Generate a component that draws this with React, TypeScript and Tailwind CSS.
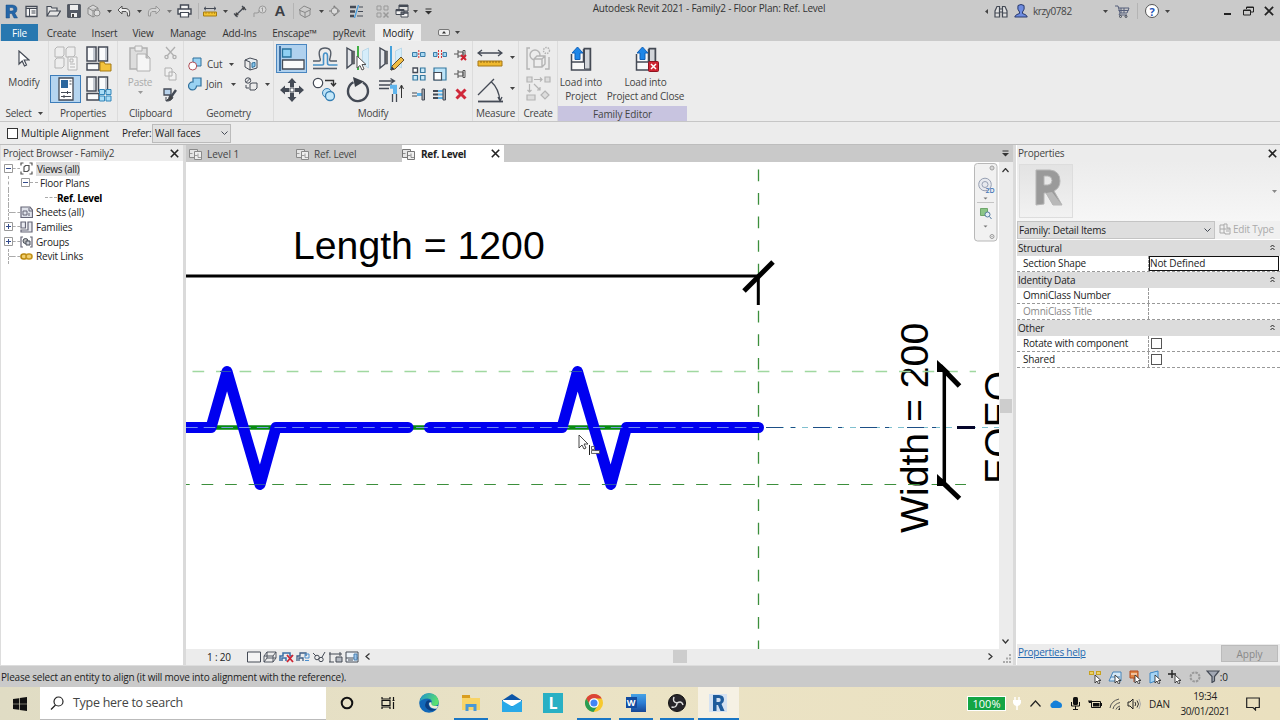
import type { ReactNode } from 'react';

type IconProps = { w?: number; h?: number; vb?: string; children: ReactNode };

const Icon = ({ w = 16, h = 16, vb, children }: IconProps) => (
  <svg width={w} height={h} viewBox={vb ?? `0 0 ${w} ${h}`} fill="none" stroke="#444a55" className="block shrink-0">
    {children}
  </svg>
);

const Slot = ({ className, children }: { className: string; children?: ReactNode }) => (
  <div className={`flex shrink-0 items-center justify-center ${className}`}>{children}</div>
);

const Caret = ({ color = '#444' }: { color?: string }) => (
  <Icon w={5} h={3}><path d="M0 0h5L2.5 3z" fill={color} stroke="none" /></Icon>
);

const Divider = () => <div className="h-4 w-px bg-[#b4b4b4]" />;

const Close = ({ s = 9 }: { s?: number }) => (
  <Icon w={s} h={s} vb="0 0 9 9"><path d="M.8.8l7.4 7.4M8.2.8L.8 8.2" stroke="#222" strokeWidth="1.6" /></Icon>
);

const PlanIcon = ({ color = '#777' }: { color?: string }) => (
  <Icon w={13} h={12}>
    <path d="M.5 1.5h8v8h-8z" fill="#e6e6e6" stroke={color} />
    <path d="M5.500 3.500h7v8h-7z" fill="#efefef" stroke={color} />
    <path d="M.5 5.500h3M5.500 7.500h3M9 5.500v4h3" stroke={color} strokeWidth=".8" />
  </Icon>
);

/* ---------- title bar ---------- */

const TitleBar = () => (
  <div className="flex h-[22px] shrink-0 items-center">
    <Slot className="w-[22px]">
      <Icon w={13} h={15}>
        <path fillRule="evenodd" d="M1 1h6.500q4.500.5 4.500 4.300 0 2.700-2.300 3.700L12.500 14H9L6.800 9.500H4.500V14H1zM4.500 3.500V7H7q1.700-.2 1.700-1.700T7 3.500z" fill="#2466a8" stroke="#174d87" strokeWidth=".5" />
      </Icon>
    </Slot>
    <Slot className="w-[18px]">
      <Icon w={13} h={13}><path d="M1 1.500h11v10H1z" fill="#f4f4f4" strokeWidth="1.300" /><path d="M1 3.500h11M4.500 4v7M6.500 6h4M6.500 8h4" /></Icon>
    </Slot>
    <Slot className="w-[26px]">
      <Icon w={15} h={12}><path d="M1 11V1.500h4l1 1.500h5v3M1 11l3-5h10.500l-3 5z" fill="#e5e5e5" strokeWidth="1.200" /></Icon>
    </Slot>
    <Slot className="w-4">
      <Icon w={14} h={14}><path d="M.7.7h12.600v12.600H.7z" fill="#555b66" /><path d="M3 1h8v5H3zM4 9h6v4H4z" fill="#eee" stroke="none" /><path d="M5 10h2v3H5z" fill="#444" stroke="none" /></Icon>
    </Slot>
    <Slot className="w-6">
      <Icon w={14} h={14}><g stroke="#8b8b8b"><path d="M1 4l5-3 5 3v6l-5 3-5-3zM1 4l5 3 5-3M6 7v6" fill="#d7d7d7" /><circle cx="10" cy="9" r="3" fill="#ddd" /></g></Icon>
    </Slot>
    <Slot className="w-[6px]"><Caret /></Slot>
    <Slot className="w-6">
      <Icon w={14} h={12}><path d="M5 1L1 5l4 4V6.500h4q2 .5 1.500 4.500h2q1-7-3.500-7.500H5z" fill="#eee" stroke="#555" /></Icon>
    </Slot>
    <Slot className="w-[6px]"><Caret /></Slot>
    <Slot className="w-6">
      <Icon w={14} h={12}><path d="M9 1l4 4-4 4V6.500H5Q3 7 3.500 11h-2Q.5 4 5 3.500h4z" fill="#d5d5d5" stroke="#999" /></Icon>
    </Slot>
    <Slot className="w-[6px]"><Caret color="#777" /></Slot>
    <Slot className="w-6">
      <Icon w={15} h={14}><path d="M3.500 5V1h8v4M1 5h13v5H1z" fill="#f5f5f5" strokeWidth="1.400" /><path d="M3.500 8.500h8v4.500h-8z" fill="#fff" strokeWidth="1.200" /></Icon>
    </Slot>
    <Slot className="w-1"><Divider /></Slot>
    <Slot className="w-5">
      <Icon w={14} h={11}><path d="M1 2.500h12M3 .8L1 2.500l2 1.700M11 .8l2 1.700-2 1.700" /><path d="M.5 6h13v4H.5z" fill="#f4c430" stroke="#a67c12" /><path d="M3 6v2M6 6v2M9 6v2M11.500 6v2" stroke="#a67c12" strokeWidth=".7" /></Icon>
    </Slot>
    <Slot className="w-[10px]"><Caret /></Slot>
    <Slot className="w-5">
      <Icon w={14} h={13}><path d="M2 11L11.500 2M1 8.500l3.500 3.500M9 1l4 4" strokeWidth="1.300" /><path d="M2 11l1-4 3 3zM12 2L8.500 3l2.500 2.500z" fill="#444" stroke="none" /></Icon>
    </Slot>
    <Slot className="w-5">
      <Icon w={14} h={13}><g stroke="#999"><path d="M1 12v-4h3q3 0 2-3" /><circle cx="9.500" cy="4.500" r="3.500" fill="#d8d8d8" /><path d="M8.500 3.500l1-.8v4" /></g></Icon>
    </Slot>
    <Slot className="w-5 font-['Liberation_Sans',sans-serif] text-[15px] font-bold text-[#3c3f45]">A</Slot>
    <Slot className="w-[6px]"><Divider /></Slot>
    <Slot className="w-[18px]">
      <Icon w={14} h={13}><path d="M1 5l5-4 7 3-1 1v5l-5 2.500-5-3V5.500zM2 5.500l5 2L12 5M7 7.500v5" stroke="#888" fill="#ccc" /></Icon>
    </Slot>
    <Slot className="w-[14px]"><Caret /></Slot>
    <Slot className="w-[14px]">
      <Icon w={12} h={12}><path d="M0 6h3M5 .8L10.500 6 5 11z" fill="#bbb" stroke="#777" /><circle cx="5.500" cy="6" r="3.200" fill="#ddd" stroke="#888" /></Icon>
    </Slot>
    <Slot className="w-7">
      <Icon w={15} h={13}><path d="M1 2h6M1 6.500h5M1 11h4" strokeWidth="2.400" /><path d="M10 2h4M9 6.500h5M8 11h6" strokeWidth="1.200" /><path d="M9.500 0L5.500 13" stroke="#4b9fe0" strokeWidth="1.300" /></Icon>
    </Slot>
    <Slot className="w-0"><Divider /></Slot>
    <Slot className="w-6">
      <Icon w={13} h={13}><g stroke="#999"><path d="M1 1h4v4H1zM8 1h4v4H8zM1 8h4v4H1z" /><path d="M7.500 7.500l5 5M12.500 7.500l-5 5" strokeWidth="1.500" /></g></Icon>
    </Slot>
    <Slot className="w-4">
      <Icon w={15} h={14}><path d="M4 1h9v6H4z" fill="#ddd" /><path d="M4 2h9" strokeWidth="2" /><path d="M1 5.500h8v5H1zM6 8h7v5H6z" fill="#f2f2f2" /><path d="M6 9h7M1 6.500h8" strokeWidth="1.500" /></Icon>
    </Slot>
    <Slot className="w-[10px]"><Caret /></Slot>
    <Slot className="w-4"><Icon w={7} h={7}><path d="M.5 1h6" stroke="#333" /><path d="M0 3h7L3.500 6.500z" fill="#333" stroke="none" /></Icon></Slot>

    <div className="flex flex-1 justify-center whitespace-nowrap pb-[6px] tracking-[-0.2px] text-[#333]">
      Autodesk Revit 2021 - Family2 - Floor Plan: Ref. Level
    </div>

    <Slot className="w-2"><Icon w={3} h={5}><path d="M3 0v5L0 2.500z" fill="#444" stroke="none" /></Icon></Slot>
    <Slot className="w-[22px]">
      <Icon w={14} h={13}><path d="M1 12V6l2-4.500h2.500V12zM13 12V6l-2-4.500H8.500V12zM5.500 4h3v3h-3zM1 8h4.500M8.500 8H13" fill="#e0e0e0" strokeWidth="1.200" /></Icon>
    </Slot>
    <Slot className="w-[18px]">
      <Icon w={14} h={14}><path d="M4 1.500q3-2 6 0 1 4-1.500 6.500v1.500q4 .8 4.800 3.500H.7q.8-2.700 4.800-3.500V8Q3 5.500 4 1.500z" fill="#6d8be0" stroke="#2a3a6c" /></Icon>
    </Slot>
    <div className="w-[70px] shrink-0 pl-[3px] tracking-[-0.4px] text-[#444]">krzy0782</div>
    <Slot className="w-[10px]"><Caret /></Slot>
    <Slot className="w-6">
      <Icon w={15} h={13}><path d="M0 1h3l2 7h7l2-5H4M5 8l-1 2h8M6 3v5M9 3v5M3.500 5.500h10" stroke="#555e7a" /><circle cx="5.500" cy="11.500" r="1" /><circle cx="11" cy="11.500" r="1" /></Icon>
    </Slot>
    <Slot className="w-[6px]"><Divider /></Slot>
    <Slot className="w-6">
      <div className="flex size-[14px] items-center justify-center rounded-full border border-[#555] bg-white text-[11px] font-bold leading-none text-[#2153b8]">?</div>
    </Slot>
    <Slot className="w-[6px]"><Caret /></Slot>
    <div className="w-[47px] shrink-0" />
    <Slot className="w-5"><div className="mt-[6px] h-[2px] w-[7px] bg-[#222]" /></Slot>
    <Slot className="w-[22px]">
      <Icon w={11} h={10}><path d="M3.500 3V1h7v5H8M3 1.500h8" stroke="#222" /><path d="M.5 4h7v5h-7zM0 4.500h8" stroke="#222" /></Icon>
    </Slot>
    <Slot className="w-5"><Close s={10} /></Slot>
    <div className="w-px" />
  </div>
);

const RibbonTabs = () => (
  <div className="flex h-[19px] shrink-0 pt-[2px] tracking-[-0.2px] text-[#333]">
    <Slot className="ml-px h-[17px] w-[37px] bg-[#2878b0] text-white">File</Slot>
    <Slot className="w-[47px]">Create</Slot>
    <Slot className="w-[39px]">Insert</Slot>
    <Slot className="w-[38px]">View</Slot>
    <Slot className="w-[52px]">Manage</Slot>
    <Slot className="w-[51px]">Add-Ins</Slot>
    <Slot className="w-[59px]">Enscape™</Slot>
    <Slot className="w-[50px]">pyRevit</Slot>
    <Slot className="ml-px w-[46px] bg-[#f0f0f0] text-[#222]">Modify</Slot>
    <Slot className="w-14 gap-[5px]">
      <Icon w={12} h={7}><rect x=".5" y=".5" width="11" height="6" rx="1.500" fill="#eee" stroke="#777" /><path d="M4 4.500h4L6 2z" fill="#333" stroke="none" /></Icon>
      <Caret />
    </Slot>
  </div>
);

/* ---------- ribbon ---------- */

const Panel = ({ className, label, children }: { className: string; label: ReactNode; children: ReactNode }) => (
  <div className={`flex shrink-0 flex-col border-r border-[#dcdcdc] ${className}`}>
    <div className="flex h-[65px] shrink-0">{children}</div>
    <div className="flex h-[15px] items-center justify-center gap-[6px] whitespace-nowrap pb-px">{label}</div>
  </div>
);

const TypeProps = ({ badge }: { badge: ReactNode }) => (
  <Icon w={26} h={26}>
    <path d="M1 1h9v14H1zM12.500 1h9v14h-9zM1 17.500h12V24H1z" fill="#fafbfc" strokeWidth="1.500" />
    <path d="M8 2v12M20 2v12" stroke="#c3c8d0" strokeWidth="2" />
    {badge}
  </Icon>
);

const MirrorIcon = ({ axis, children }: { axis: string; children: ReactNode }) => (
  <Icon w={26} h={26}>
    <path d="M2 2l5 3v13l-5 4z" fill="#e4e6ea" strokeWidth="1.400" /><path d="M7.500 5h2v13h-2z" fill="#666" strokeWidth=".6" />
    <path d="M23.500 2l-6 3v13l6 4z" fill="#d5edfa" stroke="#b3d3e6" strokeWidth=".8" />
    <path d="M13 0v24" stroke={axis} strokeWidth="2" />
    {children}
  </Icon>
);

const LoadIcon = ({ close }: { close?: boolean }) => (
  <Icon w={26} h={27}>
    <path d="M3.500 8v16h19V2.500h-7" fill="#f8f8f8" strokeWidth="1.500" />
    <path d="M16.500 3h5.500v20h-5.500z" fill="#d2d5da" />
    <path d="M4 16h11.500V3" strokeWidth="1.500" />
    <path d="M9.500 1l5.500 6h-3v6.500H7V7H4z" fill="#1d86e8" stroke="#1060b8" />
    {close && <><rect x="15.500" y="15.500" width="10" height="10" rx="1" fill="#cf2433" stroke="#8e1320" /><path d="M18 18l5 5M23 18l-5 5" stroke="#fff" strokeWidth="1.500" /></>}
  </Icon>
);

const PinIcon = ({ off }: { off?: boolean }) => (
  <Icon w={13} h={13}>
    <path d="M0 6h4M4 2v8M4 4h5v4H4M9 2.500v7h2v-7z" stroke="#555" />
    {off && <path d="M7 7l5 5M12 7l-5 5" stroke="#d02030" strokeWidth="2" />}
  </Icon>
);

const ModifyTools = () => (
  <>
    <div className="grid grid-cols-[35px_31px_35px_32px] grid-rows-[31px_31px] pt-[2px]">
      <Slot className="">
        <div className="flex h-[29px] w-[31px] items-center justify-center border border-[#4a86c0] bg-[#b0d1ee]">
          <Icon w={26} h={25}><path d="M1 0v25" stroke="#1a4f88" strokeWidth="1.500" /><path d="M3.500 3h8.500v8H3.500z" fill="#8fd0f4" stroke="#28729d" strokeWidth="1.300" /><path d="M3.500 14h21.500v9H3.500z" fill="#fafafa" strokeWidth="1.300" /></Icon>
        </div>
      </Slot>
      <Slot className="">
        <Icon w={26} h={24}>
          <path d="M1 14h6q2 0 1-3-3-10 5-10t5 10q-1 3 1 3h6" stroke="#565d68" strokeWidth="1.400" />
          <path d="M1 18h9q2 0 1.500-2V9q0-3 2-3t2 3v7q0 2 2 2h8" stroke="#4691c8" strokeWidth="1.600" />
          <path d="M1 21.500h24" stroke="#565d68" strokeWidth="1.600" />
        </Icon>
      </Slot>
      <Slot className="">
        <MirrorIcon axis="#42b045"><path d="M12 10v12l3-2.500 2 4.500 2-1-2-4.500h4z" fill="#fff" stroke="#555" /></MirrorIcon>
      </Slot>
      <Slot className="">
        <MirrorIcon axis="#46a2dc"><path d="M13 24l1-4 9-9 3 3-9 9z" fill="#f1bd43" stroke="#67502a" /><path d="M13 24l1-3 2 2z" fill="#333" /></MirrorIcon>
      </Slot>
      <Slot className="">
        <Icon w={26} h={26}>
          <path d="M13 1l4.500 5H15v4h-4V6H8.500zM13 25l4.500-5H15v-4h-4v4H8.500zM1 13l5-4.500V11h4v4H6v2.500zM25 13l-5-4.500V11h-4v4h4v2.500z" fill="#444a55" stroke="none" />
          <path d="M11 11h4v4h-4z" fill="#fff" />
        </Icon>
      </Slot>
      <Slot className="">
        <Icon w={26} h={25}><circle cx="6" cy="6" r="4.700" fill="#fff" strokeWidth="1.200" /><path d="M13 3.500h8.500V8M19 6l2.500 3L24 6" stroke="#333" strokeWidth="1.400" /><circle cx="15" cy="16" r="4.500" fill="#b9e0f6" stroke="#347eb3" /><circle cx="18" cy="19" r="4.500" fill="#c4e8fa" stroke="#347eb3" strokeWidth="1.300" /></Icon>
      </Slot>
      <Slot className="">
        <Icon w={26} h={26}><path d="M8.500 5.200a10 10 0 1 0 9.500 .3" strokeWidth="2.400" /><path d="M8 0l11 4.500L10 10z" fill="#3a3f48" stroke="none" /></Icon>
      </Slot>
      <Slot className="">
        <Icon w={26} h={26}><path d="M1 4h15M12.500 1.500L16.500 4l-4 2.500M1 8h13M1 11.500h10" strokeWidth="1.300" /><path d="M14.500 17v8M18.500 17v8" strokeWidth="1.300" /><path d="M12 9.800h5V17" stroke="#60b5ed" strokeWidth="4" /><path d="M23.500 21V9M21.500 12l2-4 2 4" stroke="#333" /></Icon>
      </Slot>
    </div>
    <div className="ml-[1px] grid grid-cols-[21px_21px_21px] grid-rows-[20px_20px_20px] pt-[3px]">
      <Slot className=""><Icon w={14} h={9}><path d="M.5 2.500H5v4H.5zM8.500 2.500H13v4H8.500z" fill="#a8d8f2" stroke="#3b7da8" /><path d="M6.800 0v9" stroke="#d33" strokeDasharray="2 1" /></Icon></Slot>
      <Slot className=""><Icon w={14} h={9}><path d="M.5 2.500H4v4H.5zM10 2.500h3.500v4H10z" fill="#a8d8f2" stroke="#3b7da8" /><path d="M5.500 0v9M8.500 0v9" stroke="#d33" strokeDasharray="2 1" /></Icon></Slot>
      <Slot className=""><PinIcon off /></Slot>
      <Slot className=""><Icon w={14} h={14}><path d="M1 1h4.500v4.500H1z" fill="#fff" strokeWidth="1.300" /><path d="M8.500 1H13v4.500H8.500zM1 8.500h4.500V13H1zM8.500 8.500H13V13H8.500z" fill="#cdebf9" stroke="#35789f" strokeWidth="1.200" /></Icon></Slot>
      <Slot className=""><Icon w={14} h={14}><path d="M1 1h12v12H1z" fill="#bde4f8" stroke="#35789f" strokeWidth="1.200" /><path d="M1 5.500h7.500V13H1z" fill="#fff" strokeWidth="1.200" /></Icon></Slot>
      <Slot className=""><PinIcon /></Slot>
      <Slot className=""><Icon w={14} h={13}><path d="M0 5h5M0 8h5" /><path d="M5 6.500h5" stroke="#5cb2e8" strokeWidth="3" /><path d="M10 1h2.500v11H10z" fill="#a4a9b0" /></Icon></Slot>
      <Slot className=""><Icon w={14} h={13}><path d="M0 3h5M0 6.500h5M0 10h5" strokeWidth="1.800" /><path d="M5 3h5M5 6.500h5M5 10h5" stroke="#5cb2e8" strokeWidth="2" /><path d="M10 1h2.500v11H10z" fill="#a4a9b0" /></Icon></Slot>
      <Slot className=""><Icon w={12} h={12}><path d="M1.500 1.500l9 9M10.500 1.500l-9 9" stroke="#d0283a" strokeWidth="3" /></Icon></Slot>
    </div>
  </>
);

const Ribbon = () => (
  <div className="flex h-[81px] shrink-0 border-b border-[#c6c6c6] bg-[#ececec] tracking-[-0.25px] text-[#444]">
    <Panel className="w-[49px]" label={<><span>Select</span><Caret /></>}>
      <div className="flex flex-1 flex-col items-center pt-[9px]">
        <Icon w={12} h={18}><path d="M1 1v13l3.200-3 2.300 5 2-1-2.300-5H11z" fill="#fff" strokeWidth="1.200" /></Icon>
        <div className="mt-[7px] tracking-[-0.1px]">Modify</div>
      </div>
    </Panel>
    <Panel className="w-[69px]" label="Properties">
      <div className="grid grid-cols-[33px_34px] grid-rows-[31px_30px] pt-[2px]">
        <Slot className="">
          <Icon w={26} h={26}><g stroke="#b5b5b5"><path d="M2 3l2-2h7v8l-2 2H2zM13 3l2-2h7v8l-2 2h-7zM2 14l2-2h7v8l-2 2H2z" fill="#eee" /><path d="M15 11h9v13h-9z" fill="#f4f4f4" /><path d="M17 13h3v3h-3zM17 18h5M17 21h5" /></g></Icon>
        </Slot>
        <Slot className=""><TypeProps badge={<path d="M14 25v-9h4l1 2h6v7z" fill="#f2c23c" stroke="#a67b14" />} /></Slot>
        <Slot className="">
          <div className="flex h-[28px] w-[31px] items-center justify-center border border-[#3d7dba] bg-[#b5d5f0]">
            <Icon w={16} h={24}><path d="M1 1h14v22H1z" fill="#fff" strokeWidth="1.300" /><path d="M3 3h7v8H3z" fill="#2c679e" stroke="none" /><path d="M11.500 4h2M11.500 7h2M3 15.500h10M3 19.500h10M9.500 14v3M6 18v3" /></Icon>
          </div>
        </Slot>
        <Slot className=""><TypeProps badge={<path d="M13.500 13.500h5v5h-5zM20 13.500h5v5h-5zM13.500 20h5v5h-5zM20 20h5v5h-5z" fill="#aadcf6" stroke="#3286ba" />} /></Slot>
      </div>
    </Panel>
    <Panel className="w-[66px]" label="Clipboard">
      <div className="flex w-[44px] flex-col items-center pt-[4px] text-[#aaa]">
        <Icon w={24} h={27}><g stroke="#b0b0b0"><path d="M2 3h17v21H2z" fill="#ddd" strokeWidth="1.500" /><path d="M7 1h7v5H7z" fill="#eee" /><path d="M9 9h9l4 4v13H9zM18 9v4h4" fill="#f5f5f5" /></g></Icon>
        <div className="mt-[3px]">Paste</div>
        <div className="mt-[2px]"><Caret color="#999" /></div>
      </div>
      <div className="flex w-4 flex-col items-center gap-[7px] pt-[5px]">
        <Icon w={13} h={14}><g stroke="#b0b0b0" strokeWidth="1.300"><path d="M2 1l8 9M11 1L3 10" /><circle cx="2.500" cy="11" r="1.600" /><circle cx="10.500" cy="11" r="1.600" /></g></Icon>
        <Icon w={13} h={14}><path d="M1 1h6l1 1v7H1zM5 5h5l2 2v6H5z" fill="#f1f1f1" stroke="#b0b0b0" /></Icon>
        <Icon w={14} h={14}><path d="M1 1h7v6H1z" fill="#b9d3ec" strokeWidth="1.300" /><path d="M13 2L8 9" strokeWidth="2.400" /><path d="M7 7l3 2.500q-2 4-7 3.500 3-2 4-6z" fill="#444" /><path d="M3 9v4" /></Icon>
      </div>
    </Panel>
    <Panel className="w-[90px]" label="Geometry">
      <div className="flex flex-col pl-[4px] pt-[13px]">
        <div className="flex h-5 items-center">
          <Icon w={14} h={14}><path d="M5 1h8v8H5z" fill="#99d2f2" stroke="#31719c" /><circle cx="4.700" cy="9" r="4" fill="#fff" stroke="#b05058" /></Icon>
          <span className="ml-[5px] w-[22px]">Cut</span><Caret />
          <div className="ml-[10px]"><Icon w={14} h={14}><path d="M1 3l5-2 7 2v8l-7 2V5z" fill="#e9edf0" /><path d="M1 3v7l5 3" /><path d="M8 6l3-.6v4L8 10.500z" fill="#8bcaf0" stroke="#31719c" /></Icon></div>
        </div>
        <div className="flex h-5 items-center">
          <Icon w={14} h={14}><path d="M5 1h8v8H8.500A4 4 0 1 1 5 5z" fill="#99d2f2" stroke="#31719c" strokeWidth="1.200" /></Icon>
          <span className="ml-[4px] w-[25px]">Join</span><Caret />
          <div className="ml-2 mr-[7px]"><Icon w={14} h={14}><circle cx="4" cy="3.500" r="2.700" /><path d="M2 5.500L6 1.500M2 8v3h3M6 7l2-1h5v5l-2 2H6z" /></Icon></div>
          <Caret />
        </div>
      </div>
    </Panel>
    <Panel className="w-[199px]" label="Modify"><ModifyTools /></Panel>
    <Panel className="w-[46px]" label="Measure">
      <div className="grid w-[34px] grid-rows-[31px_31px] justify-center pt-[2px]">
        <Slot className=""><Icon w={26} h={20}><path d="M1 4h24M5 1L1 4l4 3M21 1l4 3-4 3" strokeWidth="1.300" /><path d="M1 12h24v5H1z" fill="#f0b92e" stroke="#a57616" /><path d="M4 12v2M7 12v2M10 12v2M13 12v2M16 12v2M19 12v2M22 12v2" stroke="#805a12" strokeWidth=".8" /></Icon></Slot>
        <Slot className=""><Icon w={26} h={26}><path d="M1 24.500h25" strokeWidth="1.800" /><path d="M1 18L17 2M14 4.500q8 7 9 20M21 20l2 4 2-4" strokeWidth="1.300" /></Icon></Slot>
      </div>
      <div className="ml-[3px] grid grid-rows-[31px_31px] items-center pt-[1px]"><Caret /><Caret /></div>
    </Panel>
    <Panel className="w-[39px]" label="Create">
      <div className="grid flex-1 grid-rows-[30px_30px] pt-[2px]">
        <Slot className=""><Icon w={25} h={25}><g stroke="#b4b4b4" strokeWidth="1.400"><path d="M4 2H1v21h3M19 23h4V11" /><circle cx="9" cy="9" r="5" /><path d="M8 13l3-3h8v8l-3 3H8zM8 13h8v8M16 13l3-3" fill="#eee" /><circle cx="20.500" cy="4.500" r="3" strokeDasharray="1.500 1" /></g></Icon></Slot>
        <Slot className=""><Icon w={25} h={25}><g stroke="#b4b4b4" strokeWidth="1.200"><path d="M1 1h5v5H1zM19 1h5v5h-5zM1 19h8v5H1zM19 15l4 4-4 4-4-4z" fill="#ddd" /><path d="M8 3.500h8M14 1.500l2 2-2 2M3.500 8v8M1.500 14l2 2 2-2M8 8l6 6M14 11v3h-3" /></g></Icon></Slot>
      </div>
    </Panel>
    <div className="flex w-[129px] shrink-0 flex-col whitespace-nowrap text-center leading-[14px]">
      <div className="flex h-[65px]">
        <div className="flex w-[46px] flex-col items-center pt-[5px]"><LoadIcon /><div className="mt-[2px] tracking-[-0.15px]">Load into<br />Project</div></div>
        <div className="flex w-[83px] flex-col items-center pt-[5px]"><LoadIcon close /><div className="mt-[2px] tracking-[-0.2px]">Load into<br />Project and Close</div></div>
      </div>
      <div className="flex h-[15px] items-center justify-center bg-[#c8c4e0] tracking-[-0.1px]">Family Editor</div>
    </div>
  </div>
);

const OptionsBar = () => (
  <div className="flex h-[23px] shrink-0 items-center border-b border-[#bdbdbd] bg-[#ececec] pl-[7px] text-[#222]">
    <div className="size-[11px] border border-[#333] bg-white" />
    <span className="ml-[3px] w-[101px]">Multiple Alignment</span>
    <span className="w-[30px] tracking-[-0.3px]">Prefer:</span>
    <div className="flex h-[19px] w-[79px] items-center justify-between border border-[#bbb] bg-[#e1e1e1] px-[2px] tracking-[-0.1px]">
      Wall faces
      <Icon w={7} h={4}><path d="M.5.5l3 3 3-3" /></Icon>
    </div>
  </div>
);

/* ---------- project browser ---------- */

const Expander = ({ open }: { open?: boolean }) => (
  <Icon w={9} h={9}><path d="M.5.5h8v8h-8z" fill="#fff" stroke="#999" /><path d={open ? 'M2 4.500h5' : 'M2 4.500h5M4.500 2v5'} stroke="#334b8c" /></Icon>
);

const Dash = ({ className }: { className: string }) => <div className={`border-t border-dashed border-[#aaa] ${className}`} />;

const treeIcons = {
  views: <Icon w={13} h={13}><path d="M1 3.500V1h2.500M9.500 1H12v2.500M1 9.500V12h2.500M9.500 12H12V9.500M4 5l1.500-1.500H9V8L7.500 9.500H4z" stroke="#555" strokeWidth="1.200" /></Icon>,
  sheets: <Icon w={13} h={12}><path d="M1 1h9l2.500 3v7.500H1z" fill="#dfe2ea" stroke="#667" strokeWidth="1.200" /><path d="M3 5h4v4H3zM9 2v3h3M9 7v3" stroke="#667" /></Icon>,
  families: <Icon w={13} h={12}><path d="M1 1h4.500v6H1zM8 1h4v10H1V9h7z" fill="#e9eaf0" stroke="#667" strokeWidth="1.200" /></Icon>,
  groups: <Icon w={13} h={12}><path d="M3 1H1v10h2M10 1h2v10h-2" stroke="#667" strokeWidth="1.200" /><circle cx="5.500" cy="5" r="2.500" fill="#bbb" /><path d="M6 5h4v4H6z" fill="#cfd2da" /></Icon>,
  links: <Icon w={13} h={7}><rect x="1" y="1" width="6" height="5" rx="2.500" fill="#f0cf70" stroke="#b8860b" strokeWidth="1.600" /><rect x="6" y="1" width="6" height="5" rx="2.500" fill="#f0cf70" stroke="#c4931a" strokeWidth="1.600" /></Icon>,
};

const roots = [
  { label: 'Sheets (all)', icon: treeIcons.sheets, expandable: false },
  { label: 'Families', icon: treeIcons.families, expandable: true },
  { label: 'Groups', icon: treeIcons.groups, expandable: true },
  { label: 'Revit Links', icon: treeIcons.links, expandable: false },
];

const ProjectBrowser = () => (
  <div className="flex w-[183px] shrink-0 flex-col border-l border-[#ddd] bg-white text-[#222]">
    <div className="flex h-4 shrink-0 items-center justify-between bg-[#ececec] pl-[2px] pr-[4px] tracking-[-0.28px] text-[#444]">
      Project Browser - Family2<Close />
    </div>
    <div className="flex flex-col *:h-[14.670px] *:items-center">
      <div className="flex pl-[3px] pt-px">
        <Expander open /><Dash className="w-[7px]" />{treeIcons.views}
        <span className="ml-[3px] bg-[#dedede] px-[1px] leading-[14px] tracking-[-0.3px]">Views (all)</span>
      </div>
      <div className="flex pl-[7px]">
        <div className="h-full w-[13px] border-l border-dashed border-[#aaa]" />
        <Expander open /><Dash className="w-2" /><span className="ml-[2px] tracking-[-0.2px]">Floor Plans</span>
      </div>
      <div className="flex pl-[7px]">
        <div className="h-full w-[37px] border-l border-dashed border-[#aaa]" />
        <Dash className="w-3" /><span className="font-bold tracking-[-0.3px] text-black">Ref. Level</span>
      </div>
      {roots.map((r) => (
        <div key={r.label} className="flex pl-[3px]">
          {r.expandable ? <Expander /> : <div className="ml-1 h-full w-[5px] border-l border-dashed border-[#aaa]"><Dash className="mt-[7px] w-[5px]" /></div>}
          <Dash className="w-[7px]" />
          <div className="flex w-[13px] justify-center">{r.icon}</div>
          <span className="ml-[3px] tracking-[-0.2px]">{r.label}</span>
        </div>
      ))}
    </div>
  </div>
);

/* ---------- drawing area ---------- */

const Drawing = () => (
  <svg width="813" height="487" viewBox="186 162 813 487" fill="none" className="block bg-white">
    <g fontFamily="'Liberation Sans', Arial, sans-serif" fontSize="39.200" fill="#000">
      <text x="293" y="258.700">Length = 1200</text>
      <text transform="translate(927.500 533) rotate(-90)">Width = 200</text>
      <text transform="translate(1011.500 484) rotate(-90)">EQEQ</text>
    </g>
    <path d="M186 427.500H759" stroke="#078a12" strokeWidth="4.500" />
    <path d="M192.500 371.500H976" stroke="#a0d8a0" strokeWidth="1.500" strokeDasharray="11.700 11.850" />
    <path d="M178 484.500H966" stroke="#3c8f3c" strokeWidth="1.200" strokeDasharray="11.700 11.850" />
    <path d="M758.500 169.500V649" stroke="#3c8f3c" strokeWidth="1.300" strokeDasharray="11.700 11.850" />
    <path d="M186 276H758.500" stroke="#000" strokeWidth="3" />
    <path d="M758.300 276V305" stroke="#000" strokeWidth="3" />
    <path d="M744 291L773 262" stroke="#000" strokeWidth="5" />
    <g stroke="#0000f0" strokeWidth="11" strokeLinecap="round" strokeLinejoin="round">
      <path d="M180 427.500H211L227 371.500L260 484.500L276 427.500H408" />
      <path d="M429.500 427.500H562L577.500 371.500L610.800 484.500L626.500 427.500H758.500" />
    </g>
    <path d="M186 427.500H759" stroke="#7f9cf0" strokeWidth=".9" strokeDasharray="11.700 6" />
    <path d="M766 427.500H999" stroke="#7fc0cf" strokeWidth="1" strokeDasharray="6 6" />
    <path d="M766 427.500H940" stroke="#1d4f86" strokeWidth="1.200" strokeDasharray="17 8 4 18" />
    <path d="M220 371.500h11M571 371.500h11M254 484.500h11M605 484.500h11" stroke="#2b54b0" />
    <path d="M944.300 370V484" stroke="#000" strokeWidth="3.500" />
    <path d="M940 366L959.500 386M940 480L959.500 498.500" stroke="#000" strokeWidth="5" />
    <path d="M937 360l13 12h-13zM937 474l13 12h-13z" fill="#000" />
    <path d="M957 427.500h18" stroke="#05052a" strokeWidth="3" />
    <path d="M579 435v13l3-3 2 4 2-1-2-4h4z" fill="#fff" stroke="#333" strokeWidth=".9" />
    <path d="M589.500 445v10" stroke="#222" />
    <path d="M591.500 446.500h3v3h-3zM591.500 450.500h8v3h-8z" fill="#eee" stroke="#444" strokeWidth=".8" />
    <g>
      <rect x="974.500" y="163.500" width="22.500" height="77.500" rx="3" fill="#f1f1f1" stroke="#b8b8b8" />
      <circle cx="992" cy="168" r="2" stroke="#999" /><path d="M991 168h2" stroke="#999" strokeWidth=".6" />
      <circle cx="985" cy="184.500" r="6.300" fill="#e7e9ee" stroke="#97a0b3" /><circle cx="985" cy="184.500" r="3" stroke="#97a0b3" />
      <text x="985.500" y="193" fontSize="7" fontFamily="'Open Sans', sans-serif" fontWeight="600" fill="#4778b8">2D</text>
      <path d="M983.500 197.500h4l-2 2zM983.500 225.500h4l-2 2z" fill="#777" />
      <path d="M977 202.500h17" stroke="#c4c4c4" />
      <path d="M980.500 208.500h7v7h-7z" fill="#8cc587" stroke="#6fa76b" /><circle cx="987.500" cy="214.500" r="2.500" fill="#e5eef6" stroke="#557ba0" /><path d="M989.500 216.500l2 2.500" stroke="#557ba0" />
      <circle cx="992" cy="236.500" r="2" stroke="#999" /><path d="M991 236.500h2" stroke="#999" strokeWidth=".6" />
    </g>
  </svg>
);

const ViewBar = () => (
  <div className="flex h-[15px] shrink-0 items-center bg-[#ececec]">
    <div className="ml-[21px] w-[40px] shrink-0 tracking-[-0.2px] text-[#222]">1 : 20</div>
    <div className="flex items-center gap-[2px]">
      <Icon w={14} h={12}><path d="M.5 1h13v10H.5z" fill="#f4f4f4" /></Icon>
      <Icon w={14} h={12}><path d="M1 5l3-4h9v6l-3 4H1zM1 5h9v6M10 5l3-4M4 1v6h9M1 11l3-4" strokeWidth=".9" /></Icon>
      <Icon w={15} h={12}><path d="M1 10V5h3V2h7v3h2M3 10V7h4v3" stroke="#3a6ea5" strokeWidth="1.500" /><path d="M8 4l6 7M14 4L8 11" stroke="#cf2433" strokeWidth="1.800" /></Icon>
      <Icon w={14} h={12}><path d="M1 10V5h3V2h6v3M3 10V7h4v3" stroke="#3f5f85" strokeWidth="1.300" /><path d="M9 3h4v4H9zM9 9.500h4" stroke="#4b90d0" /></Icon>
      <Icon w={14} h={12}><path d="M1 2l3 3M13 1L9.500 7" /><circle cx="5" cy="6.500" r="2.300" /><circle cx="9" cy="8.500" r="2.200" /></Icon>
      <Icon w={15} h={12}><path d="M1 3h13M2 1v10M1 11h5M12 1v4" /><path d="M8 6h6v5H8z" fill="#b7bcc4" /></Icon>
      <Icon w={14} h={12}><path d="M1 1h12v10H1zM1 7h12M3 9h5" fill="#eef4fa" /><path d="M9 3h3v6H9z" fill="#9cc4ea" stroke="#4b80b0" /></Icon>
    </div>
    <div className="ml-[6px]"><Icon w={5} h={7}><path d="M4.500.5l-3.500 3 3.500 3" stroke="#333" strokeWidth="1.200" /></Icon></div>
    <div className="ml-[303px] h-[13px] w-[14px] bg-[#cdcdcd]" />
    <div className="ml-auto mr-[9px]"><Icon w={5} h={7}><path d="M.5.5l3.500 3-3.500 3" stroke="#333" strokeWidth="1.200" /></Icon></div>
    <div className="mr-[2px] mt-1"><Icon w={9} h={9}><path d="M7 1h2M4 4.500h2M7 4.500h2M1 8h2M4 8h2M7 8h2" stroke="#aaa" strokeWidth="2" /></Icon></div>
  </div>
);

const DrawingArea = () => (
  <div className="flex w-[833px] shrink-0 flex-col border-x-[3px] border-x-[#dadada] bg-[#ececec]">
    <div className="flex h-[17px] shrink-0 items-center bg-[#c9c9c9] text-[#444]">
      <div className="ml-[3px] flex w-[107px] items-center gap-[5px]"><PlanIcon color="#8a8a8a" />Level 1</div>
      <div className="flex w-[106px] items-center gap-[5px] tracking-[-0.2px]"><PlanIcon color="#8a8a8a" />Ref. Level</div>
      <div className="flex h-full w-[102px] items-center gap-[6px] bg-white font-bold tracking-[-0.3px] text-[#222]"><PlanIcon />Ref. Level<span className="ml-auto mr-[4px]"><Close /></span></div>
      <div className="ml-auto mr-[4px]"><Icon w={7} h={7}><path d="M.5 1h6" stroke="#333" /><path d="M0 3h7L3.500 6.500z" fill="#333" stroke="none" /></Icon></div>
    </div>
    <div className="flex h-[487px] shrink-0">
      <Drawing />
      <div className="flex w-[13px] flex-col items-center bg-[#ececec] py-[6px]">
        <Icon w={7} h={5}><path d="M.5 4l3-3.500 3 3.500" stroke="#333" strokeWidth="1.200" /></Icon>
        <div className="mt-[226px] h-[14px] w-3 bg-[#cdcdcd]" />
        <div className="mb-[-1px] mt-auto"><Icon w={7} h={5}><path d="M.5.5l3 3.500 3-3.500" stroke="#333" strokeWidth="1.200" /></Icon></div>
      </div>
    </div>
    <ViewBar />
  </div>
);

/* ---------- properties ---------- */

const Section = ({ title }: { title: string }) => (
  <div className="flex h-4 items-center justify-between bg-[#dcdcdc] pb-px pl-[1px] pr-[5px]">
    {title}
    <Icon w={5} h={7}><path d="M.5 3l2-2 2 2M.5 6l2-2 2 2" stroke="#222" /></Icon>
  </div>
);

const Row = ({ label, muted, children }: { label: string; muted?: boolean; children?: ReactNode }) => (
  <div className="flex h-4 border-b border-dashed border-[#999] bg-white">
    <div className={`flex w-[132px] items-center border-r border-dashed border-[#999] pb-[2px] pl-[6px] ${muted ? 'text-[#888]' : ''}`}>{label}</div>
    <div className="flex flex-1 items-center">{children}</div>
  </div>
);

const Check = () => <div className="ml-[2px] size-[11px] border border-[#555] bg-white" />;

const Properties = () => (
  <div className="flex flex-1 flex-col bg-white pl-[1px] tracking-[-0.2px] text-[#222]">
    <div className="flex h-4 shrink-0 items-center justify-between bg-[#ececec] pl-[1px] pr-[3px] text-[#444]">Properties<Close /></div>
    <div className="flex h-[60px] shrink-0 items-center justify-between bg-gradient-to-b from-[#ececec] to-[#f6f6f6] pl-[2px] pr-[3px]">
      <div className="flex h-[54px] w-[54px] items-center justify-center border border-[#ddd] bg-gradient-to-b from-[#e3e3e3] to-[#f2f2f2] pb-[6px] pl-1">
        <Icon w={30} h={38}>
          <path fillRule="evenodd" d="M3 1h14q10 1 10 11 0 7-6 10l8 14h-9L13 24h-2v11l-8 1zM11 7v9h4q4-.5 4-4.500T15 7z" fill="#9a9a9a" stroke="#b5b5b5" />
          <path d="M13 24l6-1 10 13h-9z" fill="#b9b9b9" stroke="none" />
        </Icon>
      </div>
      <Caret color="#888" />
    </div>
    <div className="flex h-[18px] shrink-0 items-center bg-[#f0f0f0]">
      <div className="flex h-[18px] w-[198px] items-center justify-between border border-[#c4c4c4] bg-[#dedede] pl-[1px] pr-[3px]">Family: Detail Items<Icon w={7} h={4}><path d="M.5.5l3 3 3-3" /></Icon></div>
      <div className="ml-1 flex items-center gap-[2px] pb-[2px] text-[#aaa]">
        <Icon w={12} h={12}><path d="M1 2h4V1h3v4h3v6H6v-1H1zM1 6h10M5 2v8M7 8h3" stroke="#aaa" /></Icon>Edit Type
      </div>
    </div>
    <div className="mt-[1px] flex flex-col">
      <Section title="Structural" />
      <Row label="Section Shape"><div className="mr-[1px] flex h-[15px] flex-1 items-center border border-[#111] pb-px tracking-[-0.1px]">Not Defined</div></Row>
      <Section title="Identity Data" />
      <Row label="OmniClass Number" />
      <Row label="OmniClass Title" muted />
      <Section title="Other" />
      <Row label="Rotate with component"><Check /></Row>
      <Row label="Shared"><Check /></Row>
    </div>
    <div className="mt-auto flex h-[21px] shrink-0 items-center justify-between bg-[#ececec] pl-[1px] pr-[2px]">
      <span className="pb-[5px] tracking-[-0.25px] text-[#2468b0] underline">Properties help</span>
      <div className="mb-[2px] flex h-[17px] w-[57px] items-center justify-center border border-[#bbb] bg-[#cbcbcb] tracking-normal text-[#888]">Apply</div>
    </div>
  </div>
);

/* ---------- status bar ---------- */

const Pointer = () => <path d="M7 5v8l2-2 1.500 3 1.500-1-1.500-2.500H13z" fill="#fff" stroke="#333" strokeWidth=".9" />;

const StatusBar = () => (
  <div className="flex h-[22px] shrink-0 items-center border-t border-[#ddd] bg-[#cacaca] pl-[1px] text-[#222]">
    <span className="tracking-[-0.2px]">Please select an entity to align (it will move into alignment with the reference).</span>
    <div className="ml-auto flex items-center gap-[6px]">
      <Icon w={14} h={14}><path d="M1 3h5M8 3h5" stroke="#c9a21e" strokeWidth="4" /><path d="M2 3h3M9 3h3" stroke="#f4de84" strokeWidth="1.500" /><Pointer /></Icon>
      <Icon w={14} h={14}><path d="M1 11l4-9h8v9zM3 7h9" fill="#d4e8f6" stroke="#4683b8" /><Pointer /></Icon>
      <Icon w={14} h={14}><path d="M2 1h8v7H2zM6 8v4" fill="#e08544" stroke="#b34a20" /><path d="M3 4h6" stroke="#fff" /><Pointer /></Icon>
      <Icon w={14} h={14}><path d="M2 3l8-2v9l-8 3z" fill="#a6d4f4" stroke="#3e87c4" /><Pointer /></Icon>
      <Icon w={14} h={14}><path d="M4 0v8M0 4h8" stroke="#222" strokeWidth="1.400" /><Pointer /></Icon>
      <Icon w={14} h={14}><circle cx="7" cy="7" r="4.500" stroke="#999" strokeWidth="2" strokeDasharray="2.500 1" /></Icon>
    </div>
    <div className="ml-[4px] mr-[52px] flex items-center"><Icon w={14} h={13}><path d="M1 1h12L8.500 6.500V11L6 12.500v-6z" fill="#a2a8b4" strokeWidth="1.200" /></Icon>:0</div>
  </div>
);

/* ---------- taskbar ---------- */

const App20 = ({ children }: { children: ReactNode }) => <Icon w={20} h={20}>{children}</Icon>;

const taskApps = [
  { id: 'cortana', bar: '', icon: <App20><circle cx="10" cy="10" r="5.300" stroke="#111" strokeWidth="2" /></App20> },
  { id: 'taskview', bar: '', icon: <App20><path d="M4 4v2h8V4M4 16v-2h8v2M4 7.500h8v5H4zM15.500 4v3M15.500 9v7M14.500 7.500h2" stroke="#111" strokeWidth="1.200" /></App20> },
  { id: 'edge', bar: '', icon: (
    <App20>
      <defs>
        <linearGradient id="edgeTop" x1="0" y1="0" x2="1" y2=".4"><stop stopColor="#1b8fd0" /><stop offset="1" stopColor="#5be070" /></linearGradient>
      </defs>
      <circle cx="10" cy="10" r="9.800" fill="#1268b8" stroke="none" />
      <path d="M.5 9Q2 .2 10 .2t9.800 8.300q0 4.500-5 4.500-4 0-2.300-2.500Q14 6 8.500 5.500 3 5.500.5 9z" fill="url(#edgeTop)" stroke="none" />
      <path d="M7 9q-3 6 4 8.500 4 1 7-2-7 2-8.500-4Q9 9 12 8.500 9 6 7 9z" fill="#0c3f80" stroke="none" />
      <path d="M10 11q0-2.500 2.500-1.500-.8 3 2.500 3.500h4l-1 2.500q-7 1-8-4.500z" fill="#f1ecd8" stroke="none" />
    </App20>
  ) },
  { id: 'explorer', bar: 'w-[34px] bg-[#1976c5]', icon: <App20><path d="M1 3h7l2 2h9v12H1z" fill="#f8d467" stroke="none" /><path d="M1 2h8v3H1z" fill="#d99e20" stroke="none" /><path d="M4.500 18v-7h11v7h-3v-4h-5v4z" fill="#4a98d4" stroke="none" /></App20> },
  { id: 'mail', bar: '', icon: <App20><path d="M0 7.500L10 1l10 6.500V19H0z" fill="#0d56a8" stroke="none" /><path d="M1 7h18v6H1z" fill="#fff" stroke="none" /><path d="M0 7.500l10 6 10-6V19H0z" fill="#29a9e8" stroke="none" /></App20> },
  { id: 'lumion', bar: '', icon: <div className="flex size-5 items-center justify-center bg-[#29b0c4] text-[16px] font-bold leading-none text-white">L</div> },
  { id: 'chrome', bar: 'w-[34px] bg-[#1976c5]', icon: (
    <App20>
      <circle cx="10" cy="10" r="9" fill="#f7c92e" stroke="none" />
      <path d="M2.200 5.500A9 9 0 0 1 17.800 5.500H10L6 12z" fill="#db4437" stroke="none" />
      <path d="M2.200 5.500A9 9 0 0 0 9.500 19L14 12H6z" fill="#2a9d55" stroke="none" />
      <circle cx="10" cy="10" r="4.200" fill="#4285f4" stroke="#fff" strokeWidth="1.300" />
    </App20>
  ) },
  { id: 'word', bar: 'w-[34px] bg-[#1976c5]', icon: (
    <div className="flex h-[18px] w-5 items-center bg-gradient-to-b from-[#46a2e6] via-[#2b7cd3] to-[#174796] bg-[length:15px_100%] bg-right bg-no-repeat">
      <div className="flex size-[11px] items-center justify-center bg-[#124ba0] text-[9px] font-bold leading-none text-white">W</div>
    </div>
  ) },
  { id: 'obs', bar: 'w-[34px] bg-[#1976c5]', icon: <App20><circle cx="10" cy="10" r="8.500" fill="#26242a" stroke="#111" /><path d="M10 10Q5 9 7 4M10 10q5-2.500 6 2M10 10q0 5-5.500 4" stroke="#ddd" strokeWidth="1.500" /></App20> },
  { id: 'revit', bar: 'w-[41px] bg-[#1976c5]', icon: (
    <App20>
      <path d="M1 1h18v18H1z" fill="#d5e2f2" stroke="none" />
      <path fillRule="evenodd" d="M5 2h6q5 .3 5 4.700 0 3-2.500 4.300L16.500 18h-4L10 12H8.500v6H5zM8.500 5v4H11q1.700-.2 1.700-2T11 5z" fill="#1f5c9c" stroke="none" />
    </App20>
  ) },
];

const Taskbar = () => (
  <div className="flex h-[33px] shrink-0 items-center bg-gradient-to-r from-[#e0dcc4] via-[#ebe3c5] to-[#eae0bf] text-[#222]">
    <Slot className="w-[40px]"><Icon w={14} h={14}><path d="M0 2l6-.8v5.500H0zM6.700 1.100L14 0v6.700H6.700zM0 7.300h6v5.500L0 12zM6.700 7.300H14V14l-7.300-1.100z" fill="#111" stroke="none" /></Icon></Slot>
    <div className="flex h-[33px] w-[286px] shrink-0 items-center border-b border-[#bbb] bg-white pl-[10px] text-[12.500px] text-[#444]">
      <Icon w={14} h={14}><circle cx="8.500" cy="5.500" r="4.500" stroke="#222" strokeWidth="1.200" /><path d="M5.500 9L1 13.500" stroke="#222" strokeWidth="1.200" /></Icon>
      <span className="ml-[9px] tracking-[-0.270px]">Type here to search</span>
    </div>
    {taskApps.map((a) => (
      <div key={a.id} className={`flex h-full w-[41.300px] shrink-0 flex-col items-center ${a.id === 'revit' ? 'bg-[#f6f1e4]' : ''}`}>
        <div className="flex flex-1 items-center">{a.icon}</div>
        <div className={`h-[2px] ${a.bar}`} />
      </div>
    ))}
    <div className="ml-auto flex items-center">
      <div className="flex h-[15px] w-[39px] items-center justify-center border border-white bg-[#14a544] text-[11px] leading-none text-white">100%</div>
      <Slot className="ml-[2px] w-[18px]"><Icon w={10} h={13}><path d="M3 0v4M7 0v4M5 9v4" stroke="#fff" strokeWidth="1.500" /><path d="M1 3h8v3Q8 9 5 9.500 2 9 1 6z" fill="#fff" stroke="none" /></Icon></Slot>
      <Slot className="w-[18px]"><Icon w={11} h={7}><path d="M.5 6.500l5-5.500 5 5.500" stroke="#222" strokeWidth="1.200" /></Icon></Slot>
      <Slot className="w-[22px]"><Icon w={13} h={9}><path d="M3 9a3 3 0 0 1 .3-5.500A4 4 0 0 1 10 3q3 .5 3 3.500 0 2.500-2.500 2.500z" fill="#1580d8" stroke="none" /></Icon></Slot>
      <Slot className="w-[18px]"><Icon w={9} h={13}><rect x="2" y="0" width="5" height="8" rx="1.500" fill="#111" stroke="none" /><path d="M.5 5v4h8V5M4.500 9v3M2 12.500h5" stroke="#111" /></Icon></Slot>
      <Slot className="w-[22px]"><Icon w={14} h={10}><path d="M3.500 2.500h9v6h-9z" stroke="#111" /><path d="M5 4h6.500v3.500H5zM0 1.500h4v2.500H1zM13 4h1v3h-1z" fill="#111" stroke="none" /></Icon></Slot>
      <Slot className="w-[18px]"><Icon w={12} h={12}><path d="M1 10Q2 3 10 1M4 11q1-5 7-6.500M7 11.500q.5-2.500 4-3.500" stroke="#555" /><path d="M9 12l2-3v3z" fill="#333" stroke="none" /></Icon></Slot>
      <Slot className="w-5"><Icon w={14} h={12}><path d="M1 4v4h2l3 3V1L3 4z" stroke="#222" /><path d="M8 4q1.500 2 0 4M10 2.500q3 3.500 0 7" stroke="#333" /><path d="M12 1q3 5 0 10" stroke="#aaa" /></Icon></Slot>
      <Slot className="ml-[3px] w-[25px] tracking-[-0.1px]">DAN</Slot>
      <div className="ml-[5px] w-[56px] text-center leading-[15px] tracking-[-0.4px]">19:34<br />30/01/2021</div>
      <Slot className="w-10"><Icon w={14} h={14}><path d="M.7 1h12.600v9.500H9.500v2.500L7 10.500H.7z" stroke="#222" strokeWidth="1.200" /></Icon></Slot>
      <div className="w-[7px]" />
    </div>
  </div>
);

export default function App() {
  return (
    <div className="flex h-[720px] w-[1280px] flex-col overflow-hidden whitespace-nowrap bg-[#cacaca] font-['Open_Sans','Noto_Sans',sans-serif] text-[10px] leading-[14px]">
      <TitleBar />
      <RibbonTabs />
      <Ribbon />
      <OptionsBar />
      <div className="flex h-[520px] shrink-0">
        <ProjectBrowser />
        <DrawingArea />
        <Properties />
      </div>
      <StatusBar />
      <Taskbar />
    </div>
  );
}
